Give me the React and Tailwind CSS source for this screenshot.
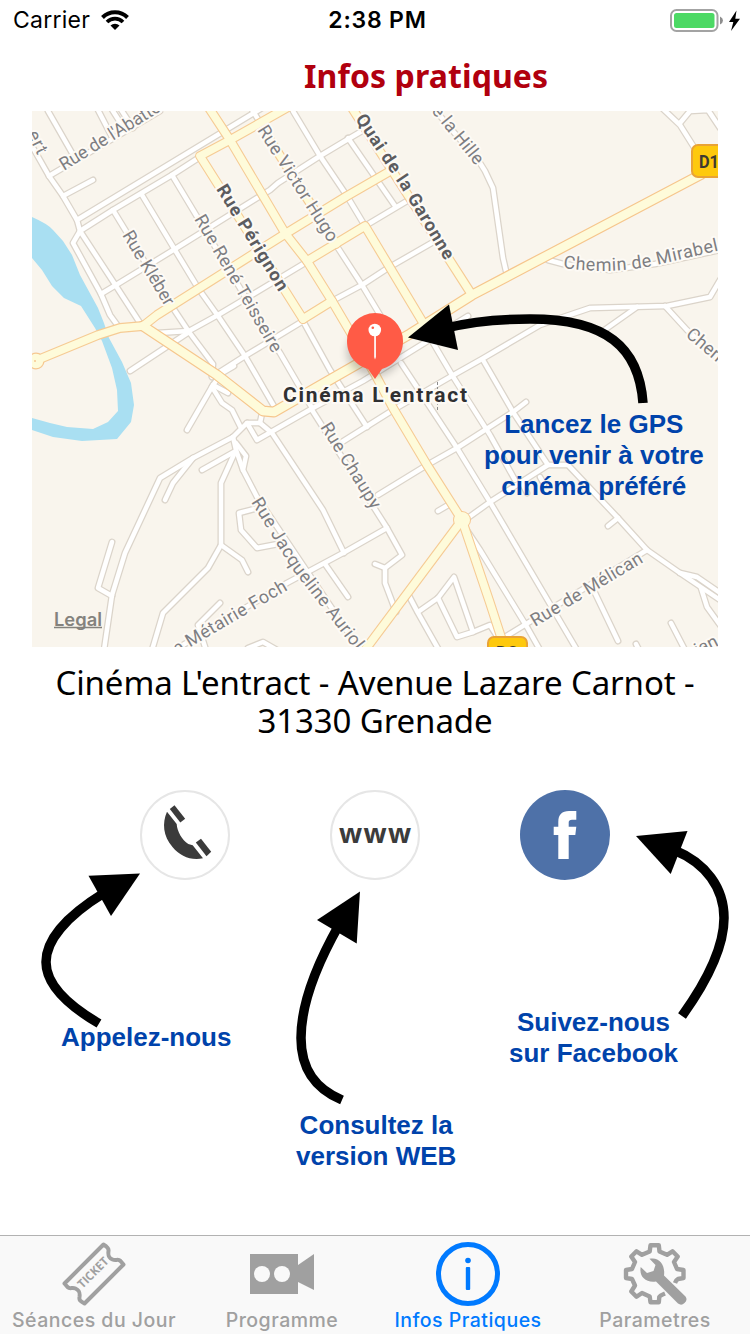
import React from "react";

const minorRoads = [
  "M32 146 L49 176 L63 196 L77 220 L80 231 L73 243 L101 294 L110 315 L118 326",
  "M80 231 L116 286 L140 323",
  "M49 176 L160 111",
  "M63 196 L93 180",
  "M77 220 L262 108",
  "M80 231 L113 210 L172 175 L200 157",
  "M113 210 L173 308 L189 332 L213 364 L212 375",
  "M142 195 L175 250 L198 288 L218 316 L245 356 L275 408",
  "M172 175 L270 338 L280 353 L312 408",
  "M101 294 L116 285 L175 249 L270 190 L278 183 L320 156 L350 138 L362 131",
  "M157 333 L189 331 L218 315 L250 296 L305 263",
  "M130 371 L189 332",
  "M212 377 L245 356 L303 321",
  "M48 111 L72 153",
  "M97 108 L112 137",
  "M111 108 L125 130",
  "M120 108 L133 128",
  "M251 108 L338 248 L362 285 L380 315",
  "M303 321 L330 370 L367 427",
  "M293 111 L320 156 L347 196 L365 226",
  "M348 138 L395 206",
  "M365 226 L412 198",
  "M332 301 L362 285 L388 268 L435 241",
  "M430 104 L480 163 L485 171 L493 188 L503 258 L506 271",
  "M662 108 L680 125 L697 152",
  "M680 123 L690 111 L708 110 L720 128",
  "M548 260 L563 264 L610 270 L655 264 L720 250",
  "M342 442 L393 410 L450 377 L482 359 L540 325 L590 308 L667 306 L710 297 L720 280",
  "M637 307 L603 331",
  "M665 306 L687 330 L720 360",
  "M233 437 L247 423 L260 423 L262 413",
  "M247 423 L257 440 L313 408 L363 381 L468 316",
  "M260 423 L272 433 L323 510 L344 553",
  "M432 341 L452 375 L490 435 L515 480",
  "M401 363 L457 448 L490 502 L577 650",
  "M483 360 L513 412 L548 465",
  "M378 495 L427 465 L457 448 L513 412 L526 402",
  "M465 520 L490 502 L548 465 L568 465 L618 518 L647 550 L680 573 L720 600",
  "M680 573 L697 577 L720 593",
  "M618 518 L608 526",
  "M540 477 L544 484",
  "M522 483 L527 493",
  "M701 588 L707 607 L720 625",
  "M647 550 L505 637",
  "M595 593 L618 641",
  "M671 623 L685 650",
  "M636 644 L640 652",
  "M464 526 L480 550 L527 627 L540 650",
  "M312 410 L387 528 L402 555 L385 568 L385 583 L396 612",
  "M375 564 L385 568",
  "M387 528 L343 553 L287 583 L178 648",
  "M325 564 L348 597",
  "M408 594 L418 613 L440 652",
  "M418 612 L438 598 L454 577 L473 632",
  "M438 598 L457 637 L473 632 L490 625 L497 636",
  "M438 511 L450 504",
  "M187 430 L213 385 L222 373 L234 366",
  "M213 385 L228 393",
  "M212 387 L222 403 L232 410 L241 428",
  "M233 437 L193 458 L160 478 L125 553 L112 595 L104 650",
  "M193 458 L173 483 L165 500",
  "M112 542 L98 588 L112 596",
  "M233 437 L236 450 L221 483 L221 545 L208 568 L163 613 L152 650",
  "M202 470 L234 452",
  "M236 443 L246 456 L243 470 L257 497 L360 650",
  "M236 450 L243 470",
  "M221 545 L242 560 L248 572",
  "M258 508 L239 513 L241 530 L257 548 L278 544",
  "M220 603 L198 625 L206 650",
  "M248 648 L263 642 L277 650",
];

const majorRoads = [
  "M209 108 L230 140 L285 233 L307 261 L332 301 L375 374 L393 408 L427 465 L462 520 L490 603 L502 640",
  "M303 319 L200 156 L230 140 L290 106",
  "M35 361 L98 335 L120 328 L143 326 L157 315 L285 234 L347 196 L392 170",
  "M352 108 L472 295",
  "M270 140 L336 244",
  "M307 261 L365 226 L422 321",
  "M303 319 L332 301",
  "M462 520 L365 650",
];

const trunkRoad =
  "M143 326 L217 375 L263 411 L274 412 L333 378 L410 334 L472 295 L550 254 L700 175 L720 160";

const labels = [
  { id: "abat", d: "M64 171 L180 99", text: "Rue de l'Abattoir", len: 126 },
  { id: "ert", d: "M27 134 L42 164", text: "ert", len: 24 },
  { id: "kleber", d: "M122 235 L170 315", text: "Rue Kléber", len: 84 },
  { id: "teisseire", d: "M194 219 L278 363", text: "Rue René Teisseire", len: 156 },
  { id: "hugo", d: "M257 130 L334 251", text: "Rue Victor Hugo", len: 134 },
  { id: "hille", d: "M431 111 L480 171", text: "e la Hille", len: 71 },
  { id: "mirabel", d: "M563 268 Q612 275 656 265 L726 249", text: "Chemin de Mirabel", len: 158 },
  { id: "chemin", d: "M685 336 L745 386", text: "Chemin", len: 62 },
  { id: "chaupy", d: "M320 427 L378 520", text: "Rue Chaupy", len: 98 },
  { id: "auriol", d: "M251 502 L292 569 L366 664", text: "Rue Jacqueline Auriol", len: 182 },
  { id: "foch", d: "M177 655 L296 585", text: "e Métairie Foch", len: 129 },
  { id: "melican", d: "M535 627 L652 557", text: "Rue de Mélican", len: 127 },
  { id: "ian", d: "M698 656 L728 641", text: "ian", len: 24 },
];

const boldLabels = [
  { id: "perignon", d: "M216 189 L286 304", text: "Rue Pérignon", len: 121 },
  { id: "quai", d: "M355 119 L400 186 L456 279", text: "Quai de la Garonne", len: 168 },
];

function StreetLabel({ id, d, text, len, bold }) {
  return (
    <>
      <path id={id} d={d} fill="none" />
      <text
        className={bold ? "font-bold" : "font-normal"}
        fontSize="18"
        fill={bold ? "#5c5c5f" : "#7e7e82"}
        stroke="#fdfaf5"
        strokeWidth="4"
        strokeLinejoin="round"
        paintOrder="stroke"
      >
        <textPath href={"#" + id} textLength={len}>{text}</textPath>
      </text>
    </>
  );
}

function RoadLayer({ roads, width, color }) {
  return (
    <g fill="none" stroke={color} strokeWidth={width} strokeLinecap="round" strokeLinejoin="round">
      {roads.map((d) => <path key={d} d={d} />)}
    </g>
  );
}

function CityMap() {
  return (
    <svg viewBox="32 111 686 536" className="block h-[536px] w-[686px] bg-[#f9f5ed] font-['Roboto',sans-serif]">
      <path
        fill="#a9dff2"
        d="M32 217 Q48 224 53 230 L63 241 L72 255 L80 275 L98 308 Q104 322 109 338 L122 362 L131 383 L134 405 L131 422 L117 439 L82 441 L53 437 L32 430 V418 L50 423 L67 427 L93 429 L108 422 L118 411 L117 390 L112 368 L102 341 L95 328 L81 306 L64 298 L52 286 L42 270 L32 258 Z"
      />
      <RoadLayer roads={minorRoads} width={7} color="#dbd4ca" />
      <RoadLayer roads={minorRoads} width={4.5} color="#ffffff" />
      <RoadLayer roads={majorRoads} width={9.8} color="#f6cb94" />
      <RoadLayer roads={[trunkRoad]} width={11} color="#f6c68d" />
      <circle cx="36" cy="361" r="8.5" fill="#f6c790" />
      <circle cx="462" cy="520" r="9" fill="#f6c790" />
      <circle cx="36" cy="361" r="7.3" fill="#fefbda" />
      <circle cx="462" cy="520" r="8" fill="#fefbda" />
      <RoadLayer roads={majorRoads} width={7.6} color="#fefbda" />
      <RoadLayer roads={[trunkRoad]} width={8.6} color="#fefbda" />
      <circle cx="35" cy="361" r="1" fill="#f6c790" />
      {labels.map((l) => <StreetLabel key={l.id} {...l} />)}
      {boldLabels.map((l) => <StreetLabel key={l.id} {...l} bold />)}
      <g className="font-bold" fill="#3d3a30" fontSize="19">
        <rect x="692" y="145" width="50" height="32" rx="6" fill="#fec90d" stroke="#e9a335" strokeWidth="2" />
        <text x="699" y="168" textLength="20" lengthAdjust="spacingAndGlyphs">D1</text>
        <rect x="488" y="637" width="39" height="32" rx="6" fill="#fec90d" stroke="#e9a335" strokeWidth="2" />
        <text x="496" y="659" textLength="22" lengthAdjust="spacingAndGlyphs">D2</text>
      </g>
      <ellipse cx="374" cy="352" rx="27" ry="24" fill="#000" opacity="0.22" className="blur-[4px]" />
      <path
        fill="#ff5b46"
        d="M375 313 A28 28 0 0 1 403 341 C403 356 393 366 382 369 L375 379 L368 369 C357 366 347 356 347 341 A28 28 0 0 1 375 313 Z"
      />
      <path d="M374.2 334 H375.9 V357 L375 359.5 L374.2 357 Z" fill="#fff" />
      <circle cx="374.8" cy="330" r="6.3" fill="#fff" />
      <circle cx="372.8" cy="327.8" r="1.3" fill="#ff5b46" />
      <path d="M437.500 382 V410" stroke="#8b8b8b" strokeWidth="1" strokeDasharray="3 2" />
      <text
        x="283" y="402" textLength="184" fontSize="21" className="font-bold" fill="#303032"
        stroke="#fdfaf5" strokeWidth="4.5" strokeLinejoin="round" paintOrder="stroke"
      >
        Cinéma L'entract
      </text>
      <text x="54" y="626" textLength="48" lengthAdjust="spacingAndGlyphs" fontSize="18" className="font-['Inter',sans-serif] font-semibold" fill="#84827d">Legal</text>
      <path d="M54 627.5 H102" stroke="#84827d" strokeWidth="1.6" />
    </svg>
  );
}

function StatusBar() {
  return (
    <header className="flex h-10 items-center font-['Inter',sans-serif] text-black">
      <div className="flex flex-1 items-center gap-[11px] pl-[13px]">
        <span className="text-[23px] tracking-[0.25px]">Carrier</span>
        <svg viewBox="0 0 28 20" className="h-5 w-7" fill="none" stroke="#000" strokeWidth="4">
          <path d="M1.5 7.5 A17.7 17.7 0 0 1 26.500 7.500" />
          <path d="M6 12 A11.300 11.300 0 0 1 22 12" strokeWidth="3.700" />
          <path d="M14 20 L9.500 15.500 A6.400 6.400 0 0 1 18.500 15.500 Z" fill="#000" stroke="none" />
        </svg>
      </div>
      <span className="pt-px text-[23px] font-semibold tracking-[0.8px]">2:38 PM</span>
      <div className="flex flex-1 justify-end pr-2">
        <svg viewBox="0 0 72 24" className="h-6 w-[72px]">
          <rect x="1" y="2" width="46.500" height="21" rx="5.500" fill="none" stroke="#a3a3a3" strokeWidth="2" />
          <rect x="4" y="5" width="40.500" height="15" rx="2.500" fill="#4cd964" />
          <path d="M50 8.500 Q53 10 53 12.500 Q53 15 50 16.500 Z" fill="#8e8e8e" />
          <path d="M66.500 2.500 L59 14 H63.300 L61 23 L70 10.800 H65.300 Z" fill="#000" />
        </svg>
      </div>
    </header>
  );
}

function ArrowOverlay() {
  return (
    <svg viewBox="0 0 750 1234" className="pointer-events-none absolute left-0 top-0 h-[1234px] w-[750px]" fill="#000">
      <g fill="none" stroke="#000" strokeWidth="9.500">
        <path d="M446 328 C474 321 502 319 530 319 C606 319 639 347 643 403" />
        <path d="M104 893 C65 917 46 941 46 962 C46 982 64 1003 99 1023.500" />
        <path d="M339 925 C313 971 301 1008 301 1038 C301 1070 316 1089 342 1100" />
        <path d="M674 850 C706 863 724 888 724 918 C724 945 710 977 682 1016" />
      </g>
      <path d="M408 337.500 L449 304.500 L458 350 Z" />
      <path d="M140 873.500 L88.500 875.700 L111 916 Z" />
      <path d="M360 891.500 L317 920 L356.700 943.500 Z" />
      <path d="M636 836 L687.500 831 L670.700 874 Z" />
    </svg>
  );
}

function Hint({ className, children }) {
  return (
    <p className={"absolute whitespace-nowrap text-center font-['Liberation_Sans',sans-serif] text-[26px] font-bold leading-[31px] text-[#0043ab] " + className}>
      {children}
    </p>
  );
}

function ContactButtons() {
  return (
    <div className="mt-[50px] flex gap-[100px] pl-[140px]">
      <svg viewBox="0 0 90 90" className="h-[90px] w-[90px]">
        <circle cx="45" cy="45" r="44" fill="#fff" stroke="#e6e6e6" strokeWidth="2" />
        <g fill="#3b3b3b">
          <path d="M29.800 19 L34.500 15.200 L45.200 28.700 L40.300 32.600 Z" />
          <path d="M55.800 52.500 L61 48.800 L71.200 61.700 L66.500 66.200 Z" />
          <path d="M27 21.700 L36.700 34 C37 41 42 50 48.300 54 L52.700 55.300 L63 68.300 C51 71 40 66 32.500 57 C23 46 22 33 27 21.700 Z" />
        </g>
      </svg>
      <svg viewBox="0 0 90 90" className="h-[90px] w-[90px] font-['Open_Sans',sans-serif] font-bold">
        <circle cx="45" cy="45" r="44" fill="#fff" stroke="#e6e6e6" strokeWidth="2" />
        <text x="9" y="52.500" textLength="72" fontSize="27" fill="#3b3b3b">www</text>
      </svg>
      <svg viewBox="0 0 90 90" className="h-[90px] w-[90px]">
        <circle cx="45" cy="45" r="45" fill="#4e71a8" />
        <path fill="#fff" d="M38.300 69 V45 H33.700 V36.700 H38.300 V32 C38.300 24.500 42 21 49 21 H56.300 V29.700 H52 Q48.700 29.700 48.700 32.500 V36.700 H56.300 L55.300 45 H48.700 V69 Z" />
      </svg>
    </div>
  );
}

function TicketIcon() {
  return (
    <svg viewBox="0 0 64 64" className="h-16 w-16">
      <path
        fill="none" stroke="currentColor" strokeWidth="4" strokeLinejoin="round"
        d="M41.500 2.500 L2.500 41.500 L5.500 45 C8 47.500 10 45 13.500 46.500 C18 48.500 18 51.500 17.500 55 C17 58 18 59 22.500 61.500 L61.500 22.500 L58.500 19 C56 16.500 54 19 50.500 17.500 C46 15.500 46 12.500 46.500 9 C47 6 45 4.500 41.500 2.500 Z"
      />
      <text
        x="0" y="0" transform="translate(20.500 47) rotate(-45)" textLength="38" lengthAdjust="spacingAndGlyphs"
        fontSize="12" fill="currentColor" className="font-['Open_Sans',sans-serif] font-bold"
      >
        TICKET
      </text>
    </svg>
  );
}

function CameraIcon() {
  return (
    <svg viewBox="0 0 64 64" className="h-16 w-16">
      <path d="M0 12 H48 V23 L64 12 V48 L48 40 V52 H0 Z" fill="currentColor" />
      <circle cx="12" cy="32" r="8" fill="#f9f9f9" />
      <circle cx="32" cy="32" r="8" fill="#f9f9f9" />
    </svg>
  );
}

function InfoIcon() {
  return (
    <svg viewBox="0 0 64 64" className="h-16 w-16">
      <circle cx="32" cy="32" r="29.500" fill="none" stroke="currentColor" strokeWidth="5" />
      <circle cx="32" cy="18.500" r="2.800" fill="currentColor" />
      <rect x="29.800" y="25" width="4.400" height="23" rx="1" fill="currentColor" />
    </svg>
  );
}

function GearIcon() {
  return (
    <svg viewBox="0 0 64 64" className="h-16 w-16">
      <path
        fill="none" stroke="currentColor" strokeWidth="4.400" strokeLinejoin="round"
        d="M42 51.500 Q37 53.500 36.300 55 L35.800 60.300 H27.500 L26.700 54.500 L19 51 L13.500 54.800 L8.300 49.500 L12 43.500 L9 37 L3 36 V28 L9 27 L12 20 L8.300 14.500 L13.500 9.300 L19 12.800 L26.700 9.500 L27.500 3.300 H35.800 L36.500 9.500 L44 12.800 L49.500 9.300 L54.700 14.500 L51 20 L54 27 L60.500 28 V36 L55 37 Q53 38 52 41"
      />
      <path
        fill="currentColor"
        d="M17.700 25 C16 34 22 41 33 39.500 L55 61.500 Q58.500 64 61.500 61 Q65 58 62.500 54.500 L41 33.500 C42.500 22 35.500 14.500 26.500 16.800 L32.500 23 L30.500 29 L24 31 Z"
      />
    </svg>
  );
}

const tabs = [
  { label: "Séances du Jour", Icon: TicketIcon },
  { label: "Programme", Icon: CameraIcon },
  { label: "Infos Pratiques", Icon: InfoIcon, active: true },
  { label: "Parametres", Icon: GearIcon },
];

function TabBar() {
  return (
    <nav className="grid h-[99px] grid-cols-[188px_188px_184px_190px] border-t border-[#b2b2b2] bg-[#f9f9f9] font-['Inter',sans-serif]">
      {tabs.map(({ label, Icon, active }) => (
        <div key={label} className={"flex flex-col items-center pt-1.5 " + (active ? "text-[#007aff]" : "text-[#a0a0a0]")}>
          <Icon />
          <span className="whitespace-nowrap text-[19.5px] font-medium leading-7 tracking-[0.5px]">{label}</span>
        </div>
      ))}
    </nav>
  );
}

export default function App() {
  return (
    <div className="relative flex h-[1334px] w-[750px] flex-col overflow-hidden bg-white">
      <StatusBar />
      <h1 className="h-[71px] pl-[304px] pt-[10px] font-['Noto_Sans',sans-serif] text-[32px] font-bold leading-[52px] tracking-[0.1px] text-[#b1000e]">
        Infos pratiques
      </h1>
      <div className="px-8">
        <CityMap />
      </div>
      <p className="mt-[17px] h-[76px] text-center font-['Noto_Sans',sans-serif] text-[33px] leading-[38px] tracking-[-0.1px] text-black">
        Cinéma L'entract - Avenue Lazare Carnot -<br />31330 Grenade
      </p>
      <ContactButtons />
      <Hint className="left-[484px] top-[409px]">Lancez le GPS<br />pour venir à votre<br />cinéma préféré</Hint>
      <Hint className="left-[61px] top-[1022px]">Appelez-nous</Hint>
      <Hint className="left-[296px] top-[1110px]">Consultez la<br />version WEB</Hint>
      <Hint className="left-[509px] top-[1007px]">Suivez-nous<br />sur Facebook</Hint>
      <ArrowOverlay />
      <div className="mt-auto">
        <TabBar />
      </div>
    </div>
  );
}
